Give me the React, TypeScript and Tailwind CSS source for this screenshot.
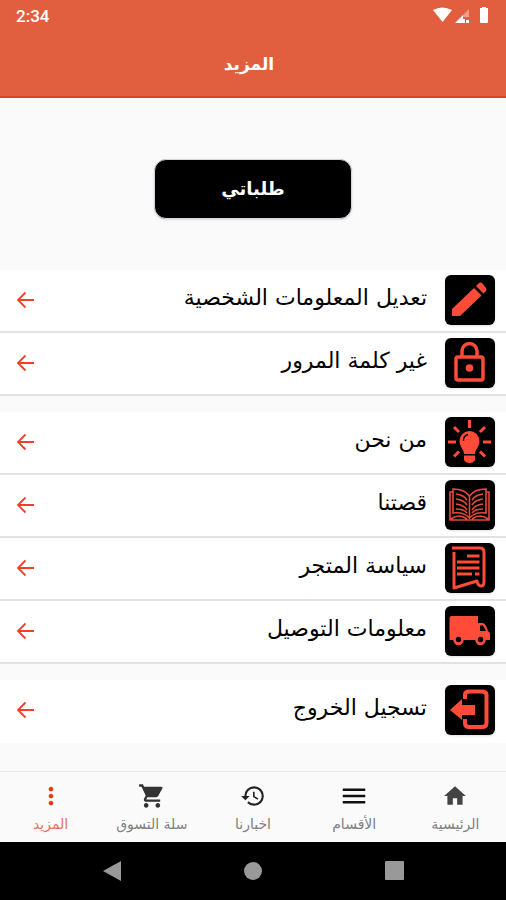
import { useState } from 'react'
import type { ReactNode } from 'react'
import { MdHistory, MdHome, MdMenu, MdMoreVert, MdShoppingCart } from 'react-icons/md'

type Item = { label: string; icon: ReactNode }

const ACCOUNT: Item[] = [
  { label: 'تعديل المعلومات الشخصية', icon: <PencilIcon /> },
  { label: 'غير كلمة المرور', icon: <LockIcon /> },
]

const STORE: Item[] = [
  { label: 'من نحن', icon: <BulbIcon /> },
  { label: 'قصتنا', icon: <BookIcon /> },
  { label: 'سياسة المتجر', icon: <PolicyIcon /> },
  { label: 'معلومات التوصيل', icon: <TruckIcon /> },
]

const SESSION: Item[] = [{ label: 'تسجيل الخروج', icon: <LogoutIcon /> }]

const TABS = [
  { id: 'home', label: 'الرئيسية', icon: <MdHome size={26} color="#444" /> },
  { id: 'sections', label: 'الأقسام', icon: <MdMenu size={30} color="#111" /> },
  { id: 'news', label: 'اخبارنا', icon: <MdHistory size={26} color="#222" /> },
  { id: 'cart', label: 'سلة التسوق', icon: <MdShoppingCart size={28} color="#333" /> },
  { id: 'more', label: 'المزيد', icon: <MdMoreVert size={28} color="#dd3c10" /> },
]

export default function App() {
  const [tab, setTab] = useState('more')

  return (
    <div dir="rtl" className="flex min-h-screen flex-col bg-[#fafafa] font-['DejaVu_Sans',sans-serif] text-black">
      <header className="border-b-2 border-[#d8451e] bg-[#e15f3e] text-white">
        <StatusBar />
        <h1 className="pt-6 pr-2 pb-5 text-center text-[17px] leading-6 font-bold">المزيد</h1>
      </header>

      <main className="flex flex-1 flex-col">
        <div className="flex justify-center pt-[61px] pb-12">
          <button type="button" className="h-15 w-[39%] rounded-xl border border-gray-300 bg-black text-lg font-bold text-white shadow-sm">
            طلباتي
          </button>
        </div>
        <div className="flex flex-col gap-4 pt-[3px]">
          <Group items={ACCOUNT} />
          <Group items={STORE} />
          <Group items={SESSION} flat />
        </div>
      </main>

      <nav className="flex border-t border-gray-200 pt-3 pb-2">
        {TABS.map(t => (
          <button
            key={t.id}
            type="button"
            onClick={() => setTab(t.id)}
            className={`flex flex-1 flex-col items-center gap-1.5 text-sm whitespace-nowrap ${tab === t.id ? 'text-[#e8735a]' : 'text-[#808080]'}`}
          >
            <span className="flex h-6 items-center">{t.icon}</span>
            {t.label}
          </button>
        ))}
      </nav>

      <SystemBar />
    </div>
  )
}

function Group({ items, flat = false }: { items: Item[]; flat?: boolean }) {
  return (
    <ul>
      {items.map(item => (
        <li key={item.label} className={`border-b-2 bg-white ${flat ? 'border-white' : 'border-[#e2e2e2]'}`}>
          <a href="#" className="flex items-center pt-[5px] pr-[11px] pb-[6px] pl-4">
            <span className="h-[50px] w-[50px] shrink-0 overflow-hidden rounded-md bg-black shadow-sm">{item.icon}</span>
            <span className="flex-1 pr-[18px] pb-1 text-[22px] leading-8">{item.label}</span>
            <ArrowIcon />
          </a>
        </li>
      ))}
    </ul>
  )
}

function StatusBar() {
  return (
    <div dir="ltr" className="flex items-center justify-between px-4 pt-1 font-['Roboto',sans-serif]">
      <span className="text-[17px] leading-6 font-medium">2:34</span>
      <svg width="58" height="20" viewBox="0 0 58 20" fill="#fff" aria-hidden>
        <path d="M1 4Q10 -1 20 4L10.500 16Z" />
        <path d="M23 17L31 9V13H33V17Z" />
        <path d="M31 9L37 3V11H31Z" opacity=".4" />
        <path d="M34 14h3v3h-3z" />
        <path d="M48 2h2V1h4v1h2v14q0 1-1 1h-6q-1 0-1-1Z" />
      </svg>
    </div>
  )
}

function SystemBar() {
  return (
    <div dir="ltr" className="flex h-[58px] items-center justify-around bg-black px-10">
      <button type="button" aria-label="Back">
        <svg width="20" height="22" viewBox="0 0 20 22" fill="#999"><path d="M20 1V21L2 11Z" /></svg>
      </button>
      <button type="button" aria-label="Home">
        <svg width="20" height="20" viewBox="0 0 20 20" fill="#999"><circle cx="10" cy="10" r="9" /></svg>
      </button>
      <button type="button" aria-label="Recents">
        <svg width="20" height="20" viewBox="0 0 20 20" fill="#999"><rect width="19" height="19" rx="1" /></svg>
      </button>
    </div>
  )
}

function ArrowIcon() {
  return (
    <svg width="18" height="18" viewBox="0 0 18 18" fill="none" stroke="#f0402c" strokeWidth="1.800" aria-hidden>
      <path d="M9.500 1.500L2 9L9.500 16.500M2.500 9H18" />
    </svg>
  )
}

function PencilIcon() {
  return (
    <svg viewBox="0 0 50 50" fill="#ff4b37" aria-hidden>
      <path d="M7 41V34L29 13L36.500 20.500L15 41Z" />
      <path d="M31 11L34 8Q35.500 7 37 8L41 13Q42 14.500 41 16L38.500 18.500Z" />
    </svg>
  )
}

function LockIcon() {
  return (
    <svg viewBox="0 0 50 50" fill="none" stroke="#ff4b37" strokeWidth="3.500" aria-hidden>
      <rect x="11" y="19" width="27" height="23" rx="2" />
      <path d="M17 19V13A7.500 7.500 0 0 1 32 13V19" />
      <circle cx="24.500" cy="30" r="3.800" fill="#ff4b37" stroke="none" />
    </svg>
  )
}

function BulbIcon() {
  return (
    <svg viewBox="0 0 50 50" aria-hidden>
      <path d="M19 37C19 32 14.500 30 14.500 24A10 10 0 0 1 34.500 24C34.500 30 30 32 30 37Z" fill="#ff4b37" />
      <path d="M19 38.500H30V43Q28.500 46 24.500 46Q20.500 46 19 43Z" fill="#ff4b37" />
      <path d="M18.500 24Q18 19 23 17.500" fill="none" stroke="#000" strokeWidth="1.400" />
      <path d="M24.500 3V11M9 10L14 15M40 10L35 15M3 25H11M38 25H46M9 39.500L14 34.500M40 39.500L35 34.500" stroke="#ff4b37" strokeWidth="3" />
    </svg>
  )
}

function BookIcon() {
  return (
    <svg viewBox="0 0 50 50" fill="none" stroke="#e8493a" strokeWidth="1.600" aria-hidden>
      <path d="M24.500 16C21 11 14 9 8 9V33C15 32 21 34 24.500 38C28 34 34 32 41 33V9C35 9 28 11 24.500 16Z" />
      <path d="M8 12H5V40H44V12H41M24.500 16V38M6 39Q14 33 22 39M27 39Q35 33 43 39" />
      <path d="M11 14Q19 15 22 20M11 19Q19 20 22 25M11 24Q19 25 22 30M11 29Q19 29 22 33M38 14Q30 15 27 20M38 19Q30 20 27 25M38 24Q30 25 27 30M38 29Q30 29 27 33" />
    </svg>
  )
}

function PolicyIcon() {
  return (
    <svg viewBox="0 0 50 50" fill="none" stroke="#ff4b37" strokeWidth="3" aria-hidden>
      <path d="M7 5H35Q39 5 39 9V39Q39 43 36 43Q33 43 32 38L9 45V9" strokeLinejoin="round" />
      <path d="M22 13H34.500M12 19H34.500M12 25H34.500M12 31H27M30 31H34.500" />
    </svg>
  )
}

function TruckIcon() {
  return (
    <svg viewBox="0 0 50 50" aria-hidden>
      <path d="M4.500 12Q4.500 10 6.500 10H33V17H38Q41 18 43 25L45 27V34H4.500Z" fill="#ff4b37" />
      <path d="M35 19.500H38L41 25H35Z" fill="#000" />
      <circle cx="13.500" cy="34" r="5.200" fill="#ff4b37" />
      <circle cx="35.500" cy="34" r="5.200" fill="#ff4b37" />
      <circle cx="13.500" cy="33.500" r="2.700" fill="#000" />
      <circle cx="35.500" cy="33.500" r="2.700" fill="#000" />
    </svg>
  )
}

function LogoutIcon() {
  return (
    <svg viewBox="0 0 50 50" aria-hidden>
      <path d="M20 14V10Q20 6.500 24 6.500H37Q41.500 6.500 41.500 10V38Q41.500 42 37 42H24Q20 42 20 38V34" fill="none" stroke="#ff4b37" strokeWidth="4" />
      <path d="M5 25L17 14V20H30V30H17V35Z" fill="#ff4b37" />
    </svg>
  )
}
